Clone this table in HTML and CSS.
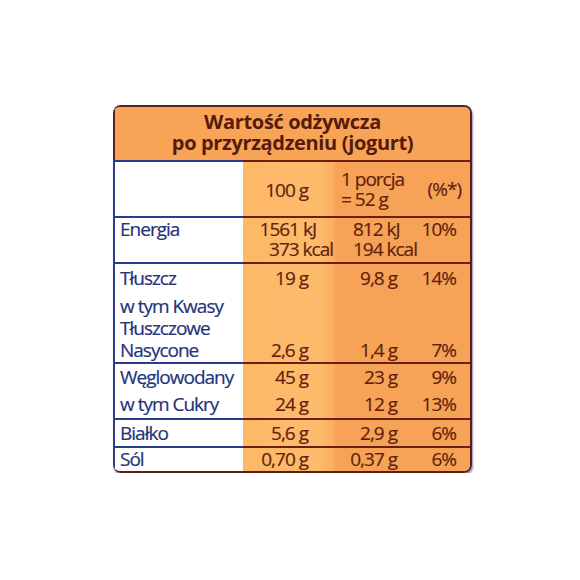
FILE: index.html
```html
<!DOCTYPE html>
<html lang="pl">
<head>
  <meta charset="UTF-8">
  <meta name="viewport" content="width=device-width, initial-scale=1.0">
  <title>Wartość odżywcza</title>
  <link rel="stylesheet" href="styles.css">
</head>
<body>
  <div class="panel">
    <div class="panel-title">
      Wartość odżywcza<br>
      po przyrządzeniu (jogurt)
    </div>

    <div class="grid">
      <!-- column heads -->
      <div class="cell label top"></div>
      <div class="cell c100 top head-100">100 g</div>
      <div class="cell cpor top head-por">1 porcja<br>= 52 g</div>
      <div class="cell cpct top head-pct">(%*)</div>

      <!-- energia -->
      <div class="cell label top start">Energia</div>
      <div class="cell c100 top energy-100"><span class="kj">1561 kJ</span><span>373 kcal</span></div>
      <div class="cell cpor top energy-por"><span>812 kJ</span><span>194 kcal</span></div>
      <div class="cell cpct top start">10%</div>

      <!-- tłuszcz -->
      <div class="cell label top">Tłuszcz</div>
      <div class="cell c100 top">19 g</div>
      <div class="cell cpor top">9,8 g</div>
      <div class="cell cpct top">14%</div>

      <div class="cell label sub">w tym Kwasy<br>Tłuszczowe<br>Nasycone</div>
      <div class="cell c100 sub end">2,6 g</div>
      <div class="cell cpor sub end">1,4 g</div>
      <div class="cell cpct sub end">7%</div>

      <!-- węglowodany -->
      <div class="cell label top">Węglowodany</div>
      <div class="cell c100 top">45 g</div>
      <div class="cell cpor top">23 g</div>
      <div class="cell cpct top">9%</div>

      <div class="cell label">w tym Cukry</div>
      <div class="cell c100">24 g</div>
      <div class="cell cpor">12 g</div>
      <div class="cell cpct">13%</div>

      <!-- białko -->
      <div class="cell label top">Białko</div>
      <div class="cell c100 top">5,6 g</div>
      <div class="cell cpor top">2,9 g</div>
      <div class="cell cpct top">6%</div>

      <!-- sól -->
      <div class="cell label top">Sól</div>
      <div class="cell c100 top">0,70 g</div>
      <div class="cell cpor top">0,37 g</div>
      <div class="cell cpct top">6%</div>
    </div>
  </div>
</body>
</html>
```

FILE: styles.css
```css
/* General styling */
body {
  margin: 0;
  padding: 105px 0 0 113px;
  background: #ffffff;
  font-family: 'Open Sans', 'Noto Sans', sans-serif;
}

.panel {
  width: 357px;
  border: 2px solid #57201c;
  border-left: none;
  border-radius: 8px;
  overflow: hidden;
  box-shadow: 1px 2px 2px rgba(70, 50, 130, 0.55);
}

.panel-title {
  height: 53px;
  box-sizing: border-box;
  padding-top: 4px;
  border-left: 2px solid #57201c;
  background: #f8a457;
  color: #561a0e;
  font-weight: 700;
  font-size: 20px;
  line-height: 21px;
  letter-spacing: -0.35px;
  text-align: center;
}

/* Table grid: column colours sit on the grid so wide texts are not covered */
.grid {
  display: grid;
  grid-template-columns: 130px 92px 78px 57px;
  grid-template-rows: 56px 46px 30px 70px 28px 28px 28px 25px;
  background: linear-gradient(90deg,
    #ffffff 0, #ffffff 130px,
    #fdb867 130px, #fdbb6c 205px, #f9ab5d 222px,
    #f7a357 222px, #f7a357 100%);
  font-size: 19px;
  line-height: 21px;
  letter-spacing: -1px;
  -webkit-text-stroke: 0.2px currentColor;
}

.cell {
  box-sizing: border-box;
  display: flex;
  flex-direction: column;
  justify-content: center;
  white-space: nowrap;
  color: #621f0e;
}

.cell.top {
  border-top: 2px solid #6a1f10;
}

.cell.start {
  justify-content: flex-start;
  padding-top: 1px;
}

.cell.end {
  justify-content: flex-end;
  padding-bottom: 1px;
}

.label {
  border-left: 2px solid #2b3c8c;
  color: #24337a;
  padding-left: 5px;
}

.label.top {
  border-top-color: #2b3c8c;
}

.label.sub {
  justify-content: flex-start;
  padding-top: 3px;
  line-height: 22px;
}

.c100 {
  align-items: flex-end;
  padding-right: 27px;
}

.cpor {
  align-items: flex-end;
  padding-right: 16px;
}

.cpct {
  align-items: flex-end;
  padding-right: 14px;
}

.head-100 {
  padding-top: 2px;
}

.head-por {
  align-items: flex-start;
  padding-left: 6px;
  line-height: 20px;
}

.head-pct {
  padding-right: 9px;
}

.energy-100 {
  justify-content: flex-start;
  padding-top: 1px;
  padding-right: 2px;
  line-height: 20px;
}

.energy-100 .kj {
  padding-right: 17px;
}

.energy-por {
  justify-content: flex-start;
  align-items: flex-start;
  padding-top: 1px;
  padding-left: 18px;
  line-height: 20px;
}
```
